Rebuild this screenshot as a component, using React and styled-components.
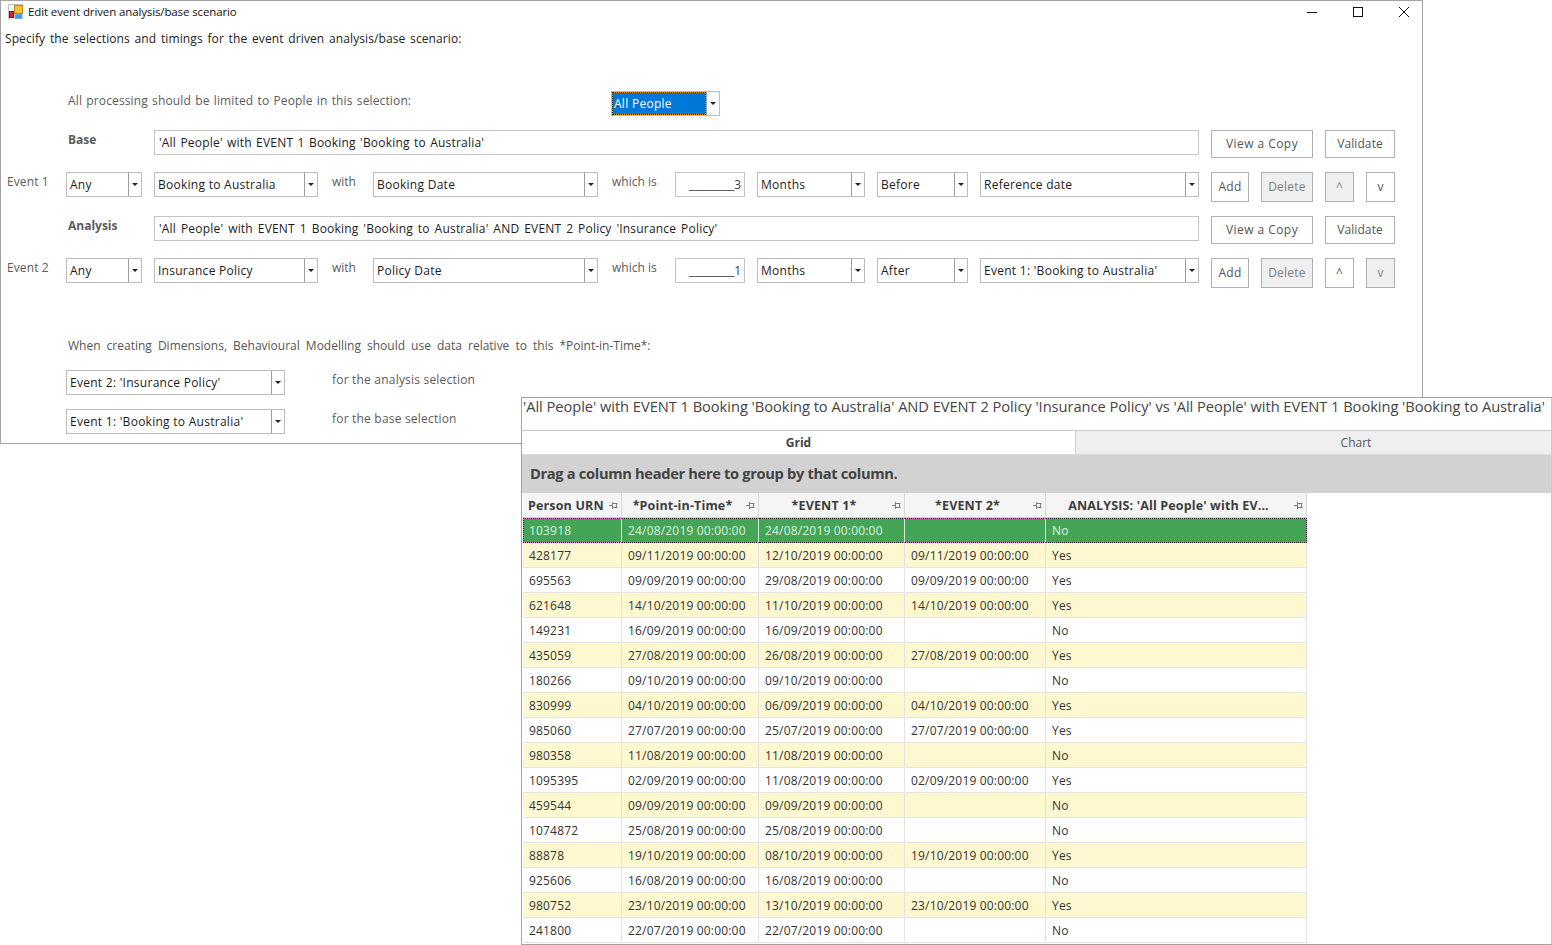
import React from 'react';
import styled, { createGlobalStyle } from 'styled-components';

const Global = createGlobalStyle`
  html, body { margin: 0; padding: 0; background: #fff; }
  body { width: 1552px; height: 945px; overflow: hidden; position: relative; font-family: "Open Sans", "Noto Sans", "Liberation Sans", sans-serif; font-size: 12px; color: #1a1a1a; }
  * { box-sizing: border-box; }
`;

const Desktop = styled.div`
  position: relative;
  width: 1552px;
  height: 945px;
  overflow: hidden;
`;

const FormWindow = styled.section`
  position: absolute;
  left: 0;
  top: 0;
  width: 1423px;
  height: 444px;
  background: #fff;
  border: 1px solid #a3a3a3;
  display: flex;
  flex-direction: column;
`;

const TitleBar = styled.header`
  height: 23px;
  display: flex;
  align-items: center;
  padding: 0 0 2px 7px;
  gap: 4px;
  flex: none;
`;

const TitleText = styled.span`
  font-size: 11.5px;
  color: #111;
  flex: 1;
  letter-spacing: -0.12px;
`;

const WinButtons = styled.div`
  display: flex;
  align-items: center;
  margin-right: -5px;
`;

const WinButton = styled.span`
  width: 46px;
  height: 21px;
  display: flex;
  align-items: center;
  justify-content: center;
`;

const Intro = styled.p`
  margin: 6px 0 0 4px;
  height: 17px;
  line-height: 17px;
  font-size: 12px;
  letter-spacing: 0.1px;
  word-spacing: 1.5px;
  color: #222;
`;

const FormStack = styled.div`
  margin-top: 44px;
  display: flex;
  flex-direction: column;
  gap: 14px;
  flex: none;
`;

const Row = styled.div`
  display: flex;
  align-items: flex-start;
  gap: 12px;
  padding-left: ${p => p.$pad || 0}px;
  height: ${p => p.$h}px;
`;

const Label = styled.span`
  width: ${p => p.$w}px;
  flex: none;
  padding-left: ${p => p.$pl || 0}px;
  height: 17px;
  line-height: 17px;
  margin-top: ${p => p.$mt ?? 1}px;
  color: #5b5b5b;
  white-space: nowrap;
  font-weight: ${p => (p.$bold ? 700 : 400)};
  letter-spacing: ${p => p.$ls ?? 0.2}px;
  word-spacing: ${p => p.$ws ?? 0}px;
`;

const Combo = styled.div`
  width: ${p => p.$w}px;
  height: 25px;
  flex: none;
  display: flex;
  border: 1px solid #bcbcbc;
  background: #fff;
  margin-left: ${p => p.$ml || 0}px;
`;

const ComboValue = styled.span`
  flex: 1;
  min-width: 0;
  padding-left: 3px;
  line-height: 24px;
  white-space: nowrap;
  overflow: hidden;
  color: #1c1c1c;
  letter-spacing: 0.27px;
`;

const SelectedValue = styled.span`
  flex: 1;
  padding-left: 1px;
  height: 23px;
  line-height: 22px;
  border: 1px dotted #111;
  background: linear-gradient(#0078d7, #0078d7) padding-box, #f0982e border-box;
  color: #fff;
  letter-spacing: 0.28px;
`;

const ComboArrow = styled.span`
  width: 13px;
  flex: none;
  border-left: 1px solid #9c9c9c;
  display: flex;
  align-items: center;
  justify-content: center;
  &::after {
    content: '';
    width: 0;
    height: 0;
    border-left: 3px solid transparent;
    border-right: 3px solid transparent;
    border-top: 3px solid #222;
  }
`;

const TextBox = styled.div`
  width: 1045px;
  height: 25px;
  flex: none;
  border: 1px solid #c4c4c4;
  padding-left: 4px;
  line-height: 24px;
  color: #1c1c1c;
  white-space: nowrap;
  word-spacing: ${p => p.$ws}px;
  letter-spacing: 0.2px;
`;

const Spin = styled.div`
  width: 70px;
  height: 25px;
  flex: none;
  border: 1px solid #c4c4c4;
  padding-right: 3px;
  text-align: right;
  line-height: 24px;
  color: #3a3a3a;
  white-space: nowrap;
  overflow: hidden;
  letter-spacing: -0.2px;
`;

const Btn = styled.button`
  width: ${p => p.$w}px;
  height: ${p => p.$h}px;
  flex: none;
  padding: 0 0 2px;
  border: 1px solid #b0b0b0;
  background: ${p => (p.$off ? '#efefef' : '#fff')};
  color: ${p => (p.$off ? '#808080' : '#555')};
  font: inherit;
  font-size: 12px;
  letter-spacing: ${p => p.$ls ?? 0.25}px;
`;

const LowerNote = styled.p`
  margin: 49px 0 0 67px;
  height: 17px;
  line-height: 17px;
  color: #555;
  letter-spacing: 0;
  word-spacing: 2.95px;
`;

const PointRow = styled.div`
  display: flex;
  align-items: flex-start;
  gap: 47px;
  margin-top: ${p => p.$mt}px;
  height: 25px;
`;

const GridWindow = styled.section`
  position: absolute;
  left: 521px;
  top: 397px;
  width: 1031px;
  height: 548px;
  background: #fff;
  border: 1px solid #a3a3a3;
  border-right-color: #c8c8c8;
  display: flex;
  flex-direction: column;
`;

const GridTitle = styled.h2`
  margin: 0;
  height: 32px;
  flex: none;
  padding-left: 1px;
  font-size: 14.67px;
  font-weight: 400;
  line-height: 16px;
  color: #444;
  white-space: nowrap;
  letter-spacing: -0.04px;
`;

const Tabs = styled.div`
  display: flex;
  height: 25px;
  flex: none;
  border-top: 1px solid #c8c8c8;
`;

const Tab = styled.div`
  flex: none;
  width: ${p => p.$w}px;
  line-height: 24px;
  text-align: center;
  padding-left: ${p => (p.$active ? 0 : 85)}px;
  font-weight: ${p => (p.$active ? 700 : 400)};
  color: ${p => (p.$active ? '#444' : '#555')};
  background: ${p => (p.$active ? '#fff' : '#efefef')};
  border-left: ${p => (p.$active ? 'none' : '1px solid #cfcfcf')};
  border-bottom: 1px solid #dcdcdc;
`;

const GroupPanel = styled.div`
  height: 38px;
  flex: none;
  background: #d2d2d2;
  padding-left: 8px;
  font-size: 14.67px;
  font-weight: 700;
  line-height: 37px;
  color: #444;
  letter-spacing: -0.33px;
`;

const Grid = styled.div`
  width: 785px;
  margin-left: 1px;
  display: grid;
  grid-template-columns: 99px 137px 146px 141px 261px;
`;

const Head = styled.div`
  height: 25px;
  background: #f5f5f5;
  border-right: 1px solid #d8d8d8;
  border-bottom: 1px solid #cfcfcf;
  display: flex;
  align-items: center;
  padding: 0 3px 0 5px;
  font-weight: 700;
  color: #3d3d3d;
  font-size: 12.5px;
  letter-spacing: 0.15px;
  white-space: nowrap;
`;

const HeadLabel = styled.span`
  flex: 1;
  text-align: ${p => (p.$left ? 'left' : 'center')};
  padding-right: ${p => (p.$left ? 0 : 8)}px;
`;

const Cell = styled.div`
  height: 25px;
  border-right: 1px solid ${p => (p.$sel ? '#d6ead9' : '#e3e3e3')};
  border-bottom: 1px solid #e3e3e3;
  padding-left: 6px;
  line-height: 25px;
  white-space: nowrap;
  overflow: hidden;
  background: ${p => (p.$alt ? '#fdf8cf' : '#fff')};
  color: #333;
  letter-spacing: 0.18px;
  ${p => p.$sel && `
    color: #dff1e3;
    line-height: 23px;
    border-top: 1px dotted #111;
    border-bottom: 1px dotted #111;
    background: linear-gradient(#43a555, #43a555) padding-box, #e58ad0 border-box;
  `}
  ${p => p.$first && p.$sel && 'border-left: 1px dotted #111; padding-left: 5px;'}
  ${p => p.$last && p.$sel && 'border-right: 1px dotted #111;'}
`;

const AppIcon = () => (
  <svg width="16" height="16" viewBox="0 0 16 16">
    <path d="M0.5 15.5V0.5H15.5" stroke="#c4c4c4" fill="none" />
    <rect x="6.5" y="1.5" width="8" height="8" fill="#f2c230" stroke="#b98a10" />
    <rect x="1.5" y="7.5" width="4" height="6" fill="#d8262a" stroke="#8b1518" />
    <rect x="7" y="10.5" width="7" height="4" fill="#4a96e8" stroke="#6da9e6" />
  </svg>
);

const Minimize = () => (
  <svg width="12" height="12" viewBox="0 0 12 12"><path d="M1 6.5h10" stroke="#111" fill="none" /></svg>
);
const Maximize = () => (
  <svg width="12" height="12" viewBox="0 0 12 12"><rect x="1.5" y="1.5" width="9" height="9" stroke="#111" fill="none" /></svg>
);
const Close = () => (
  <svg width="12" height="12" viewBox="0 0 12 12"><path d="M1 1l10 10M11 1L1 11" stroke="#111" fill="none" /></svg>
);

const Pin = () => (
  <svg width="9" height="7" viewBox="0 0 9 7" style={{ flex: 'none' }}>
    <path d="M0 3.5h3.5M3.5 0v7M3.5 1.5h5M3.5 5.5h5M7.5 1v5" stroke="#7d7d7d" fill="none" />
  </svg>
);

const ComboBox = ({ w, value, ml }) => (
  <Combo $w={w} $ml={ml}>
    <ComboValue>{value}</ComboValue>
    <ComboArrow />
  </Combo>
);

const EventRow = ({ name, what, date, num, unit, rel, ref2, upOff, downOff }) => (
  <Row $h={30} $pad={6}>
    <Label $w={47} $mt={1} $ls={0.1}>{name}</Label>
    <ComboBox w={76} value="Any" />
    <ComboBox w={164} value={what} />
    <Label $w={31} $pl={2} $mt={1} $ls={0}>with</Label>
    <ComboBox w={225} value={date} />
    <Label $w={53} $pl={2} $mt={1} $ls={0}>which is</Label>
    <Spin>{`_________${num}`}</Spin>
    <ComboBox w={108} value={unit} />
    <ComboBox w={91} value={rel} />
    <ComboBox w={219} value={ref2} />
    <Btn $w={38} $h={30}>Add</Btn>
    <Btn $w={52} $h={30} $off>Delete</Btn>
    <Btn $w={29} $h={30} $off={upOff}>^</Btn>
    <Btn $w={29} $h={30} $off={downOff}>v</Btn>
  </Row>
);

const ScenarioRow = ({ name, text, ws }) => (
  <Row $h={28} $pad={67}>
    <Label $w={74} $bold $mt={1} $ls={0}>{name}</Label>
    <TextBox $ws={ws}>{text}</TextBox>
    <Btn $w={102} $h={28} $ls={0.45}>View a Copy</Btn>
    <Btn $w={70} $h={28} $ls={0.1}>Validate</Btn>
  </Row>
);

const heads = ['Person URN', '*Point-in-Time*', '*EVENT 1*', '*EVENT 2*', "ANALYSIS: 'All People' with EV..."];

const rows = [
  ['103918', '24/08/2019 00:00:00', '24/08/2019 00:00:00', '', 'No'],
  ['428177', '09/11/2019 00:00:00', '12/10/2019 00:00:00', '09/11/2019 00:00:00', 'Yes'],
  ['695563', '09/09/2019 00:00:00', '29/08/2019 00:00:00', '09/09/2019 00:00:00', 'Yes'],
  ['621648', '14/10/2019 00:00:00', '11/10/2019 00:00:00', '14/10/2019 00:00:00', 'Yes'],
  ['149231', '16/09/2019 00:00:00', '16/09/2019 00:00:00', '', 'No'],
  ['435059', '27/08/2019 00:00:00', '26/08/2019 00:00:00', '27/08/2019 00:00:00', 'Yes'],
  ['180266', '09/10/2019 00:00:00', '09/10/2019 00:00:00', '', 'No'],
  ['830999', '04/10/2019 00:00:00', '06/09/2019 00:00:00', '04/10/2019 00:00:00', 'Yes'],
  ['985060', '27/07/2019 00:00:00', '25/07/2019 00:00:00', '27/07/2019 00:00:00', 'Yes'],
  ['980358', '11/08/2019 00:00:00', '11/08/2019 00:00:00', '', 'No'],
  ['1095395', '02/09/2019 00:00:00', '11/08/2019 00:00:00', '02/09/2019 00:00:00', 'Yes'],
  ['459544', '09/09/2019 00:00:00', '09/09/2019 00:00:00', '', 'No'],
  ['1074872', '25/08/2019 00:00:00', '25/08/2019 00:00:00', '', 'No'],
  ['88878', '19/10/2019 00:00:00', '08/10/2019 00:00:00', '19/10/2019 00:00:00', 'Yes'],
  ['925606', '16/08/2019 00:00:00', '16/08/2019 00:00:00', '', 'No'],
  ['980752', '23/10/2019 00:00:00', '13/10/2019 00:00:00', '23/10/2019 00:00:00', 'Yes'],
  ['241800', '22/07/2019 00:00:00', '22/07/2019 00:00:00', '', 'No'],
];

export default function App() {
  return (
    <Desktop>
      <Global />
      <FormWindow>
        <TitleBar>
          <AppIcon />
          <TitleText>Edit event driven analysis/base scenario</TitleText>
          <WinButtons>
            <WinButton><Minimize /></WinButton>
            <WinButton><Maximize /></WinButton>
            <WinButton><Close /></WinButton>
          </WinButtons>
        </TitleBar>
        <Intro>Specify the selections and timings for the event driven analysis/base scenario:</Intro>
        <FormStack>
          <Row $h={25} $pad={67}>
            <Label $w={531} $mt={1} $ls={0.13} $ws={1}>All processing should be limited to People in this selection:</Label>
            <Combo $w={109}>
              <SelectedValue>All People</SelectedValue>
              <ComboArrow />
            </Combo>
          </Row>
          <ScenarioRow name="Base" ws={1} text="'All People' with EVENT 1 Booking 'Booking to Australia'" />
          <EventRow name="Event 1" what="Booking to Australia" date="Booking Date" num="3" unit="Months" rel="Before" ref2="Reference date" upOff />
          <ScenarioRow name="Analysis" ws={1.55} text="'All People' with EVENT 1 Booking 'Booking to Australia' AND EVENT 2 Policy 'Insurance Policy'" />
          <EventRow name="Event 2" what="Insurance Policy" date="Policy Date" num="1" unit="Months" rel="After" ref2="Event 1: 'Booking to Australia'" downOff />
        </FormStack>
        <LowerNote>When creating Dimensions, Behavioural Modelling should use data relative to this *Point-in-Time*:</LowerNote>
        <PointRow $mt={16}>
          <ComboBox w={219} ml={65} value="Event 2: 'Insurance Policy'" />
          <Label $w={200} $mt={1}>for the analysis selection</Label>
        </PointRow>
        <PointRow $mt={14}>
          <ComboBox w={219} ml={65} value="Event 1: 'Booking to Australia'" />
          <Label $w={200} $mt={1}>for the base selection</Label>
        </PointRow>
      </FormWindow>

      <GridWindow>
        <GridTitle>'All People' with EVENT 1 Booking 'Booking to Australia' AND EVENT 2 Policy 'Insurance Policy' vs 'All People' with EVENT 1 Booking 'Booking to Australia'</GridTitle>
        <Tabs>
          <Tab $w={553} $active>Grid</Tab>
          <Tab $w={476}>Chart</Tab>
        </Tabs>
        <GroupPanel>Drag a column header here to group by that column.</GroupPanel>
        <Grid>
          {heads.map((h, i) => (
            <Head key={h}>
              <HeadLabel $left={i === 0}>{h}</HeadLabel>
              <Pin />
            </Head>
          ))}
          {rows.map((r, ri) =>
            r.map((c, ci) => (
              <Cell
                key={`${ri}-${ci}`}
                $sel={ri === 0}
                $alt={ri % 2 === 1}
                $first={ci === 0}
                $last={ci === 4}
              >
                {c}
              </Cell>
            ))
          )}
        </Grid>
      </GridWindow>
    </Desktop>
  );
}
